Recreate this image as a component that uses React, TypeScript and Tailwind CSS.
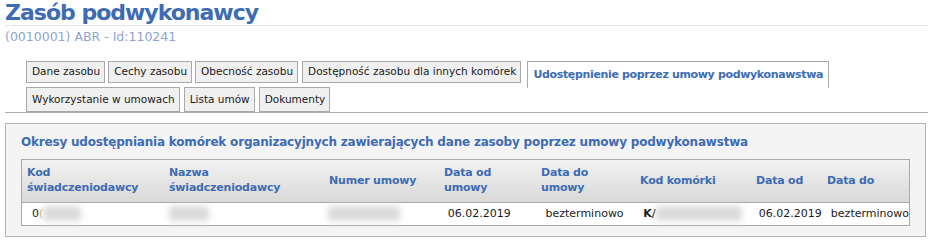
import React from "react";

const F = { fontFamily: "'DejaVu Sans', Verdana, sans-serif" };

function Tab({ label, active = false, h }: { label: string; active?: boolean; h: string }) {
  if (active) {
    return (
      <div className={`ml-[3px] flex ${h} items-center border border-b-0 border-[#a9a9a9] bg-white pl-[5px] pr-[5px] text-[11px] font-bold tracking-[-0.35px] text-[#3d6cb4]`}>
        {label}
      </div>
    );
  }
  return (
    <div className={`flex ${h} items-center border border-[#a9a9a9] bg-[#f0f0f0] pl-[5px] pr-[4px] text-[10.5px] text-[#1a1a1a]`}>
      {label}
    </div>
  );
}

function Blur({ w }: { w: string }) {
  return <span className={`inline-block h-[15px] ${w} rounded-sm bg-[#dadada] align-middle blur-[3px]`} />;
}

export default function App() {
  const headers = [
    ["Kod", "świadczeniodawcy"],
    ["Nazwa", "świadczeniodawcy"],
    ["Numer umowy"],
    ["Data od", "umowy"],
    ["Data do", "umowy"],
    ["Kod komórki"],
    ["Data od"],
    ["Data do"],
  ];
  const widths = ["w-[142px]", "w-[160px]", "w-[115px]", "w-[97px]", "w-[99px]", "w-[116px]", "w-[71px]", "flex-1"];
  return (
    <div style={F} className="h-[244px] w-[933px] overflow-hidden bg-white">
      <div className="px-[5px]">
        <div className="border-b border-[#e4e4e4] pt-[1px] text-[22px] font-bold leading-[24px] tracking-[-1px] text-[#3d6cb4]">
          Zasób podwykonawcy
        </div>
        <div className="mt-[3px] text-[12.5px] leading-[16px] text-[#8ea3d2]">(0010001) ABR - Id:110241</div>

        <div className="mt-[16px] border-b border-[#a9a9a9] pl-[21px]">
          <div className="flex items-start gap-[3px]">
            <Tab label="Dane zasobu" h="h-[22px]" />
            <Tab label="Cechy zasobu" h="h-[22px]" />
            <Tab label="Obecność zasobu" h="h-[22px]" />
            <div className="ml-[1px]">
              <Tab label="Dostępność zasobu dla innych komórek" h="h-[22px]" />
            </div>
            <Tab label="Udostępnienie poprzez umowy podwykonawstwa" active h="h-[27px]" />
          </div>
          <div className="-mt-[1px] flex items-end gap-[4px]">
            <Tab label="Wykorzystanie w umowach" h="h-[25px]" />
            <Tab label="Lista umów" h="h-[25px]" />
            <Tab label="Dokumenty" h="h-[25px]" />
          </div>
        </div>

        <div className="mt-[10px] mr-[2px] border border-[#b4b4b4] bg-[#f4f4f4] px-[15px] pb-[10px] pt-[10px]">
          <div className="text-[12px] font-bold leading-[16px] tracking-[-0.2px] text-[#3d6cb4]">
            Okresy udostępniania komórek organizacyjnych zawierających dane zasoby poprzez umowy podwykonawstwa
          </div>
          <div className="mt-[9px] border border-[#a9a9a9] bg-white">
            <div className="flex h-[43px] border-b border-[#a9a9a9] bg-gradient-to-b from-[#f2f2f2] to-[#d9d9d9]">
              {headers.map((h, i) => (
                <div
                  key={i}
                  className={`${widths[i]} flex flex-col justify-center pl-[5px] pb-[2px] text-[11px] font-bold leading-[15px] tracking-[-0.2px] text-[#3d6cb4]`}
                >
                  {h.map((l, j) => (
                    <span key={j}>{l}</span>
                  ))}
                </div>
              ))}
            </div>
            <div className="flex h-[22px] items-center text-[11px] text-[#1a1a1a]">
              <div className={`${widths[0]} pl-[10px]`}>
                0<span className="text-[#f0a060]">(</span>
                <Blur w="w-[38px]" />
              </div>
              <div className={`${widths[1]} pl-[5px]`}>
                <Blur w="w-[40px]" />
              </div>
              <div className={`${widths[2]} pl-[5px]`}>
                <Blur w="w-[72px]" />
              </div>
              <div className={`${widths[3]} pl-[10px]`}>06.02.2019</div>
              <div className={`${widths[4]} pl-[11px]`}>bezterminowo</div>
              <div className={`${widths[5]} pl-[10px]`}>
                <span className="font-bold">K/</span>
                <Blur w="w-[86px]" />
              </div>
              <div className={`${widths[6]} pl-[10px]`}>06.02.2019</div>
              <div className={`${widths[7]} pl-[11px]`}>bezterminowo</div>
            </div>
          </div>
        </div>
      </div>
    </div>
  );
}
